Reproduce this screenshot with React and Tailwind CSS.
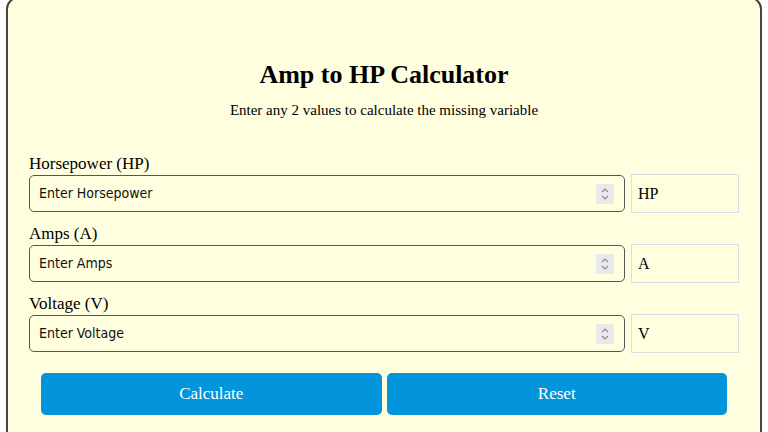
import React from "react";

function Spinner() {
  return (
    <div className="flex h-[20px] w-[18px] shrink-0 items-center justify-center bg-[#e9e9ed]">
      <svg width="10" height="14" viewBox="0 0 10 14" fill="none">
        <path d="M2 5 L5 2 L8 5" stroke="#8a8a8a" strokeWidth="1.1" />
        <path d="M2 9 L5 12 L8 9" stroke="#8a8a8a" strokeWidth="1.1" />
      </svg>
    </div>
  );
}

function Field({ label, placeholder, unit }) {
  return (
    <div className="flex flex-col">
      <label className="block text-[17px] leading-[20px] text-black">{label}</label>
      <div className="flex items-center gap-[6px]">
        <div className="flex h-[37px] min-w-0 flex-1 items-center rounded-[5px] border border-[#555] pl-[9px] pr-[10px]">
          <input
            type="text"
            inputMode="decimal"
            placeholder={placeholder}
            className="min-w-0 flex-1 bg-transparent font-['DejaVu_Sans_Condensed','DejaVu_Sans',sans-serif] text-[14px] text-[#111] outline-none placeholder:text-[#111]"
          />
          <Spinner />
        </div>
        <div className="flex h-[39px] w-[108px] shrink-0 items-center border border-[#d9dee4] px-[6px] text-[16px] text-black">
          {unit}
        </div>
      </div>
    </div>
  );
}

export default function App() {
  return (
    <div className="min-h-screen overflow-hidden bg-white px-[6px] font-['Liberation_Serif','Times_New_Roman',serif]">
      <div className="mt-[-3px] min-h-[460px] rounded-[12px] border-2 border-[#444] bg-[#ffffe0] px-[21px] pt-[20px]">
        <h1 className="mt-[41px] text-center text-[26px] font-bold leading-[30px] text-black">
          Amp to HP Calculator
        </h1>
        <p className="mt-[10px] text-center text-[15px] leading-[20px] text-black">
          Enter any 2 values to calculate the missing variable
        </p>
        <div className="mt-[34px] flex flex-col gap-[11px]">
          <Field label="Horsepower (HP)" placeholder="Enter Horsepower" unit="HP" />
          <Field label="Amps (A)" placeholder="Enter Amps" unit="A" />
          <Field label="Voltage (V)" placeholder="Enter Voltage" unit="V" />
        </div>
        <div className="mt-[20px] flex gap-[5px] px-[12px]">
          <button className="h-[42px] flex-1 rounded-[5px] bg-[#0395dc] text-[17px] text-white">
            Calculate
          </button>
          <button className="h-[42px] flex-1 rounded-[5px] bg-[#0395dc] text-[17px] text-white">
            Reset
          </button>
        </div>
      </div>
    </div>
  );
}
